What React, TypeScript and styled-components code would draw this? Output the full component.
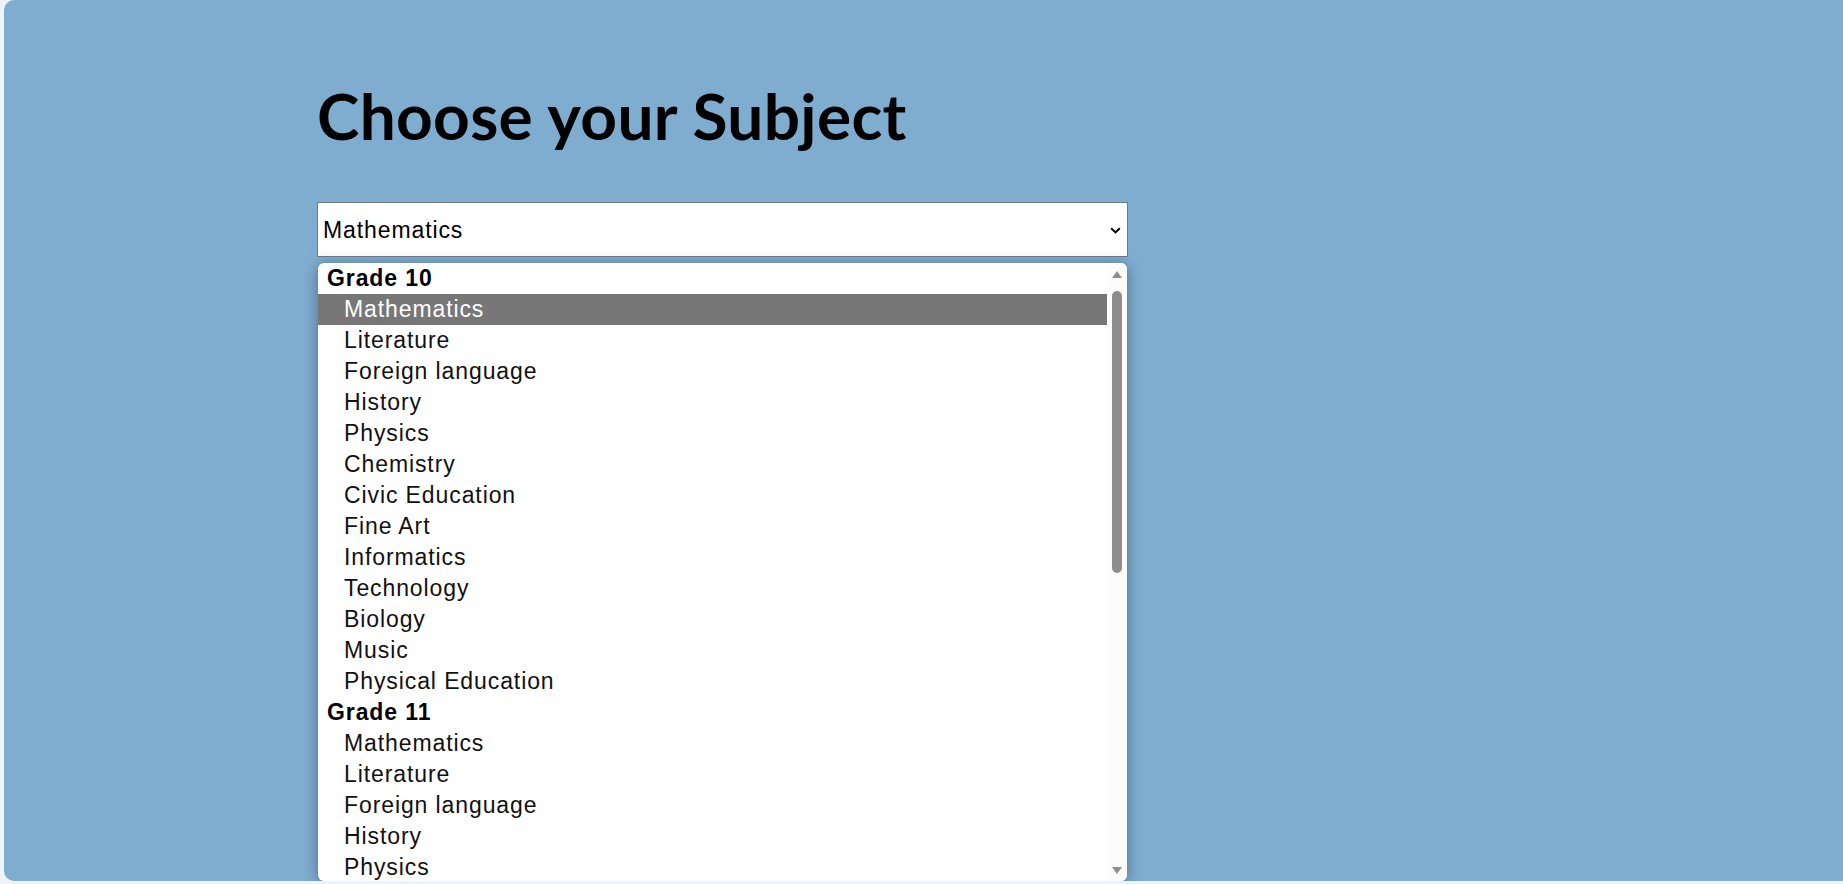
import React from "react"
import styled, { createGlobalStyle } from "styled-components"

const SUBJECTS = [
  "Mathematics",
  "Literature",
  "Foreign language",
  "History",
  "Physics",
  "Chemistry",
  "Civic Education",
  "Fine Art",
  "Informatics",
  "Technology",
  "Biology",
  "Music",
  "Physical Education",
]

const GRADES = ["Grade 10", "Grade 11", "Grade 12"]

const GlobalStyle = createGlobalStyle`
  html, body {
    margin: 0;
    padding: 0;
  }
  body {
    background: #edf3f8;
    font-family: "Liberation Sans", Arial, sans-serif;
    overflow: hidden;
  }
`

const Page = styled.div`
  height: 884px;
  padding-left: 4px;
  box-sizing: border-box;
`

const Panel = styled.main`
  height: 881px;
  box-sizing: border-box;
  padding: 84px 0 0 313px;
  background: #7fadd0;
  border-radius: 10px 0 0 10px;
  display: flex;
  flex-direction: column;
  align-items: flex-start;
  overflow: hidden;
`

const Title = styled.h1`
  margin: 0 0 54px;
  font-family: Lato, "Open Sans", sans-serif;
  font-weight: 700;
  font-size: 64px;
  line-height: 64px;
  letter-spacing: 0.3px;
  color: #000;
`

const Picker = styled.div`
  width: 811px;
  flex: 1;
  min-height: 0;
  display: flex;
  flex-direction: column;
  gap: 6px;
`

const SelectBox = styled.div`
  height: 55px;
  box-sizing: border-box;
  padding: 1px 6px 0 5px;
  display: flex;
  align-items: center;
  justify-content: space-between;
  background: #fff;
  border: 1px solid #6f7b88;
  font-size: 23px;
  letter-spacing: 0.9px;
  color: #000;
`

const Dropdown = styled.div`
  flex: 1;
  min-height: 0;
  margin: 0 1px;
  display: flex;
  background: #fff;
  border-radius: 6px;
  overflow: hidden;
  box-shadow: 0 2px 14px rgba(25, 45, 70, 0.5);
`

const OptionList = styled.ul`
  flex: 1;
  margin: 0;
  padding: 0;
  list-style: none;
  overflow: hidden;
`

const GroupLabel = styled.li`
  height: 31px;
  line-height: 31px;
  padding-left: 9px;
  font-size: 23px;
  font-weight: 700;
  letter-spacing: 0.9px;
  color: #000;
`

const Option = styled.li<{ $active?: boolean }>`
  height: 31px;
  line-height: 31px;
  padding-left: 26px;
  font-size: 23px;
  letter-spacing: 0.9px;
  white-space: nowrap;
  color: ${(p) => (p.$active ? "#fff" : "#111")};
  background: ${(p) => (p.$active ? "#777777" : "transparent")};
`

const Scrollbar = styled.div`
  width: 20px;
  padding: 8px 0 7px;
  display: flex;
  flex-direction: column;
  align-items: center;
  background: #fcfcfc;
`

const Arrow = styled.div<{ $down?: boolean }>`
  width: 0;
  height: 0;
  border-left: 5.5px solid transparent;
  border-right: 5.5px solid transparent;
  ${(p) =>
    p.$down
      ? "border-top: 7px solid #8f8f8f; margin-top: auto;"
      : "border-bottom: 7px solid #8f8f8f;"}
`

const Thumb = styled.div`
  width: 10px;
  height: 282px;
  margin-top: 13px;
  border-radius: 5px;
  background: #8d8d8d;
`

const Chevron = () => (
  <svg width="11" height="7" viewBox="0 0 11 7">
    <path
      d="M1.2 1.2 L5.5 5.4 L9.8 1.2"
      fill="none"
      stroke="#000"
      strokeWidth="2"
    />
  </svg>
)

export default function App() {
  return (
    <>
      <GlobalStyle />
      <Page>
        <Panel>
          <Title>Choose your Subject</Title>
          <Picker>
            <SelectBox>
              <span>Mathematics</span>
              <Chevron />
            </SelectBox>
            <Dropdown role="listbox">
              <OptionList>
                {GRADES.map((grade, gi) => (
                  <React.Fragment key={grade}>
                    <GroupLabel>{grade}</GroupLabel>
                    {SUBJECTS.map((subject, si) => (
                      <Option key={subject} $active={gi === 0 && si === 0}>
                        {subject}
                      </Option>
                    ))}
                  </React.Fragment>
                ))}
              </OptionList>
              <Scrollbar>
                <Arrow />
                <Thumb />
                <Arrow $down />
              </Scrollbar>
            </Dropdown>
          </Picker>
        </Panel>
      </Page>
    </>
  )
}
